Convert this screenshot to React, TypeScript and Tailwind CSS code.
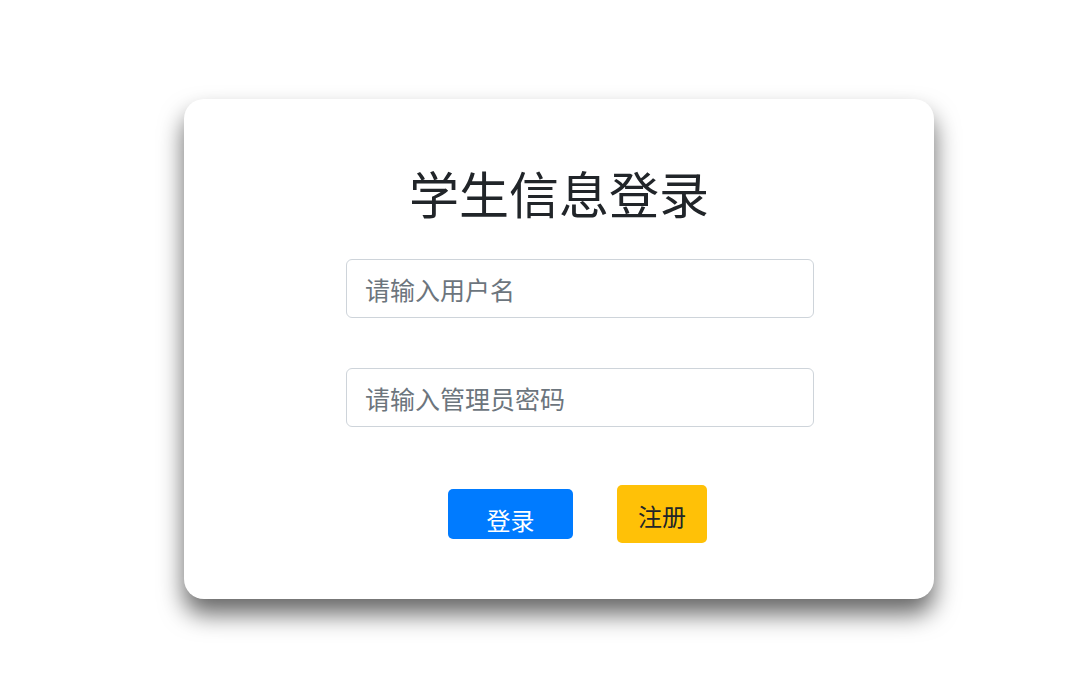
import React from "react";

const App: React.FC = () => {
    return (
        <div className="min-h-[677px] w-full bg-white flex justify-center pt-[99px] pl-[26px] font-['Noto_Sans_CJK_SC',sans-serif]">
            <div className="w-[750px] h-[500px] bg-white rounded-[20px] shadow-[0_15px_25px_rgba(0,0,0,0.6)] flex flex-col items-center pt-[63px]">
                <h1 className="text-[50px] leading-[60px] text-[#212529] font-normal">学生信息登录</h1>
                <div className="ml-[42px] mt-[2px] flex flex-col">
                    <input
                        type="text"
                        placeholder="请输入用户名"
                        className="mt-[35px] w-[468px] h-[59px] px-[18px] border border-[#ced4da] rounded-[6px] text-[25px] text-[#495057] placeholder:text-[#6c757d] outline-none"
                    />
                    <input
                        type="password"
                        placeholder="请输入管理员密码"
                        className="mt-[50px] w-[468px] h-[59px] px-[18px] border border-[#ced4da] rounded-[6px] text-[25px] text-[#495057] placeholder:text-[#6c757d] outline-none"
                    />
                </div>
                <div className="mt-[58px] flex items-center gap-[44px] ml-[37px]">
                    <button className="w-[125px] h-[50px] bg-[#007bff] text-white text-[24px] rounded-[5px] pt-[11px] leading-none">登录</button>
                    <button className="w-[90px] h-[58px] bg-[#ffc107] text-[#212529] text-[24px] rounded-[5px] pt-[3px] leading-none">注册</button>
                </div>
            </div>
        </div>
    );
};

export default App;
